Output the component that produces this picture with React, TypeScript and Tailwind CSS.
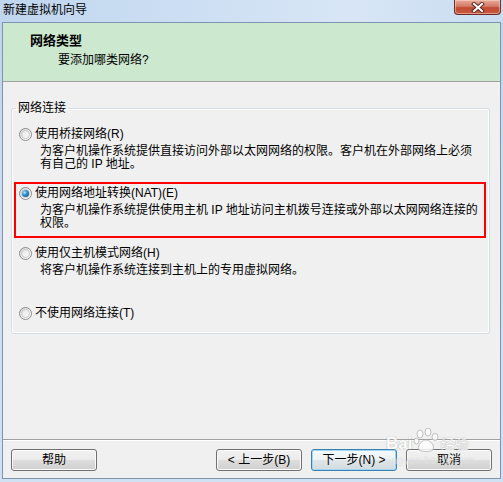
import React from "react";

function Radio({ checked }: { checked?: boolean }) {
  return (
    <div className="relative w-[13px] h-[13px] shrink-0 rounded-full border border-[#8b8b8b] bg-[linear-gradient(135deg,#d4d4d4_0%,#f4f4f4_60%,#ffffff_100%)] flex items-center justify-center">
      <div className="w-[9px] h-[9px] rounded-full border border-[#c8c8c8] bg-[linear-gradient(135deg,#e6e6e6,#fafafa)] flex items-center justify-center">
        {checked && (
          <div className="w-[7px] h-[7px] rounded-full bg-[radial-gradient(circle_at_35%_35%,#bfe6ff_0%,#3b9ad9_35%,#1a5c9a_75%,#0f3f70_100%)]" />
        )}
      </div>
    </div>
  );
}

function Option({
  title,
  lines,
  checked,
  h,
  children,
}: {
  title: string;
  lines: string[];
  checked?: boolean;
  h: string;
  children?: React.ReactNode;
}) {
  return (
    <div className={`relative pl-[7px] ${h}`}>
      {children}
      <div className="flex items-center gap-[3px] h-[13px]">
        <Radio checked={checked} />
        <span className="whitespace-nowrap leading-[13px]">{title}</span>
      </div>
      {lines.length > 0 && (
        <div className="mt-[4px] pl-[21px]">
          {lines.map((l, i) => (
            <div key={i} className="whitespace-nowrap leading-[13px] h-[13px]">
              {l}
            </div>
          ))}
        </div>
      )}
    </div>
  );
}

function Btn({ children, primary }: { children: React.ReactNode; primary?: boolean }) {
  return (
    <div
      className={
        primary
          ? "w-[86px] h-[22px] rounded-[3px] border border-[#3c7fb1] shadow-[inset_0_0_0_1px_#9fd8f6] bg-[linear-gradient(180deg,#f4f9fc_0%,#eef3f6_48%,#dfe6ea_52%,#d4dbe0_100%)] flex items-center justify-center leading-[13px] whitespace-nowrap"
          : "w-[86px] h-[22px] rounded-[3px] border border-[#707070] shadow-[inset_0_0_0_1px_#fbfbfb] bg-[linear-gradient(180deg,#f2f2f2_0%,#ebebeb_48%,#dddddd_52%,#cfcfcf_100%)] flex items-center justify-center leading-[13px] whitespace-nowrap"
      }
    >
      {children}
    </div>
  );
}

export default function App() {
  return (
    <div className="relative w-[503px] h-[482px] flex flex-col bg-[linear-gradient(180deg,#bcd3ed_0%,#c8dbf1_30%,#d0e1f4_100%)] text-[12px] text-black [font-family:'Liberation_Sans','Noto_Sans_CJK_SC',sans-serif] overflow-hidden">
      {/* title bar */}
      <div className="h-[22px] flex items-start shrink-0 bg-[linear-gradient(90deg,#c0d6ee_0%,#cddff3_40%,#d8e6f6_70%,#c9dcf1_100%)]">
        <span className="pl-[3px] leading-[20px] whitespace-nowrap">新建虚拟机向导</span>
        <div className="ml-auto mr-[2px] w-[47px] h-[15px] rounded-b-[4px] border border-t-0 border-[#6b2c26] bg-[linear-gradient(180deg,#e9a99a_0%,#d47b67_45%,#c24a33_55%,#c85a40_100%)] shadow-[inset_0_0_0_1px_rgba(255,220,210,0.5)] flex items-center justify-center">
          <svg width="14" height="11" viewBox="0 0 14 11">
            <path d="M3 2 L11 9 M11 2 L3 9" stroke="#5a2a24" strokeWidth="4" strokeLinecap="square" />
            <path d="M3 2 L11 9 M11 2 L3 9" stroke="#ffffff" strokeWidth="2" strokeLinecap="square" />
          </svg>
        </div>
      </div>

      {/* client */}
      <div className="mx-[2px] flex-1 border border-[#7d93ae] flex flex-col bg-[#f0f0f0]">
        {/* header */}
        <div className="h-[59px] shrink-0 bg-[#cce8cf] border-b border-[#a0a0a0] pt-[10px]">
          <div className="pl-[27px] text-[13px] font-bold leading-[16px] whitespace-nowrap">网络类型</div>
          <div className="pl-[55px] mt-[3px] leading-[16px] whitespace-nowrap">要添加哪类网络?</div>
        </div>

        {/* body */}
        <div className="flex-1">
          <fieldset className="mt-[19px] ml-[8px] w-[479px] border border-[#d5dfe5] rounded-[3px] shadow-[inset_0_0_0_1px_#ffffff] pt-[13px]">
            <legend className="ml-[4px] px-[2px] leading-[14px] whitespace-nowrap">网络连接</legend>
            <Option
              h="h-[59px]"
              title="使用桥接网络(R)"
              lines={[
                "为客户机操作系统提供直接访问外部以太网网络的权限。客户机在外部网络上必须",
                "有自己的 IP 地址。",
              ]}
            />
            <Option
              h="h-[60px]"
              checked
              title="使用网络地址转换(NAT)(E)"
              lines={[
                "为客户机操作系统提供使用主机 IP 地址访问主机拨号连接或外部以太网网络连接的",
                "权限。",
              ]}
            >
              <div className="absolute left-[2px] top-[-5px] w-[472px] h-[56px] border-2 border-[#ff0000]" />
            </Option>
            <Option
              h="h-[60px]"
              title="使用仅主机模式网络(H)"
              lines={["将客户机操作系统连接到主机上的专用虚拟网络。"]}
            />
            <Option h="h-[26px]" title="不使用网络连接(T)" lines={[]} />
          </fieldset>
        </div>

        {/* footer */}
        <div className="h-[39px] shrink-0 border-t border-[#a0a0a0] shadow-[inset_0_1px_0_#ffffff] pt-[9px] px-[8px] flex justify-between items-start">
          <Btn>帮助</Btn>
          <div className="flex gap-[9px]">
            <Btn>&lt; 上一步(B)</Btn>
            <Btn primary>下一步(N) &gt;</Btn>
            <Btn>取消</Btn>
          </div>
        </div>
      </div>
      <div className="h-[3px] shrink-0" />

      {/* watermark overlay */}
      <div className="absolute left-[386px] top-[426px] w-[90px] h-[44px] pointer-events-none opacity-80">
        <div className="flex items-end h-[26px]">
          <span className="text-[17px] font-bold leading-[17px] text-white [text-shadow:0_0_1px_#a8a8a8,0_0_1px_#a8a8a8]">Bai</span>
          <svg width="26" height="24" viewBox="0 0 26 24" className="mx-[1px]">
            <g fill="#ffffff" stroke="#b5b5b5" strokeWidth="1">
              <ellipse cx="7" cy="6" rx="3" ry="4" />
              <ellipse cx="15" cy="4" rx="3" ry="4" />
              <ellipse cx="22" cy="9" rx="3" ry="3.5" />
              <ellipse cx="3.5" cy="13" rx="2.5" ry="3" />
              <path d="M6 22 C4 16 10 12 13 12 C17 12 22 17 20 22 C17 24 9 24 6 22 Z" />
            </g>
          </svg>
          <span className="text-[14px] leading-[16px] text-white [text-shadow:0_0_1px_#a8a8a8,0_0_1px_#a8a8a8]">经验</span>
        </div>
        <div className="mt-[4px] text-[10px] leading-[10px] text-[#e0e0e0] whitespace-nowrap tracking-[0.5px]">jingyan.baidu.com</div>
      </div>
    </div>
  );
}
